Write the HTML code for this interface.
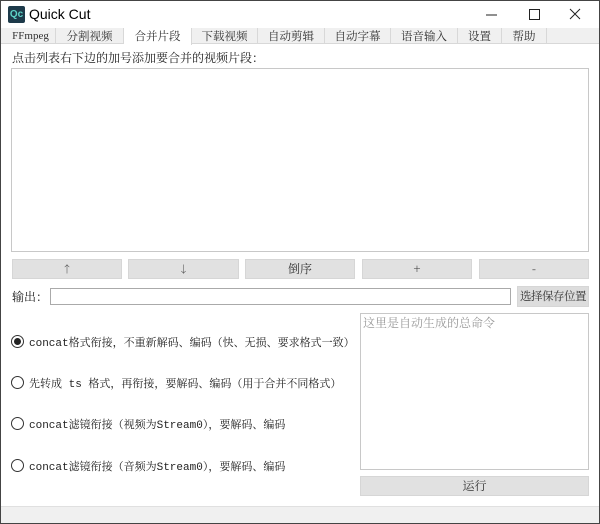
<!DOCTYPE html>
<html><head><meta charset="utf-8"><style>
*{box-sizing:border-box;margin:0;padding:0}
body{width:600px;height:524px;overflow:hidden;background:#fff;font-family:"Liberation Mono","Noto Serif CJK SC",serif;font-size:12px;color:#222;position:relative}
.win{position:absolute;left:0;top:0;width:600px;height:524px;border:1px solid #444;background:#fff}
.a{position:absolute}
.title{left:0;top:0;width:598px;height:27px;background:#fff}
.logo{left:7px;top:5px;width:17px;height:17px;background:#1d3a4a;color:#5fd4c8;font:bold 10px "Liberation Sans",sans-serif;line-height:17px;text-align:center;border-radius:2px}
.tt{left:28px;top:5px;font:14px "Liberation Sans",sans-serif;color:#000}
.tabs{left:0;top:27px;width:598px;height:16px;background:#f0f0f0;border-bottom:1px solid #d8d8d8}
.tab{position:absolute;top:27px;height:16px;line-height:16px;text-align:center;color:#333;font-size:11.5px;font-family:"Noto Serif CJK SC",serif;border-right:1px solid #d8d8d8;white-space:nowrap;overflow:hidden}
.sel{background:#fff;height:17px}
.box{border:1px solid #c8c8c8;background:#fff}
.btn{background:#e1e1e1;border:1px solid #d6d6d6;text-align:center;color:#333;font-family:"Noto Serif CJK SC",serif;white-space:nowrap;overflow:hidden}
.rad{position:absolute;left:10px;width:13px;height:13px;border:1px solid #333;border-radius:50%;background:#fff}
.rad.on::after{content:"";position:absolute;left:2px;top:2px;width:7px;height:7px;border-radius:50%;background:#222}
.rt{position:absolute;left:28px;font-size:11px;white-space:nowrap}
.cn{font-family:"Noto Serif CJK SC",serif}
</style></head><body><div class="win">
<div class="a title"></div>
<div class="a logo">Qc</div>
<div class="a tt">Quick Cut</div>
<svg class="a" style="left:480px;top:6px" width="110" height="16"><line x1="5" y1="8" x2="16" y2="8" stroke="#222"/><rect x="48.5" y="2.5" width="10" height="10" fill="none" stroke="#222"/><path d="M89 2l10 10M99 2l-10 10" stroke="#222"/></svg>
<div class="a tabs"></div>
<div class="tab" style="left:5px;width:50px;font-family:'Liberation Serif',serif;font-size:11px">FFmpeg</div>
<div class="tab" style="left:55px;width:68px">分割视频</div>
<div class="tab sel" style="left:123px;width:68px">合并片段</div>
<div class="tab" style="left:191px;width:66px">下载视频</div>
<div class="tab" style="left:257px;width:67px">自动剪辑</div>
<div class="tab" style="left:324px;width:66px">自动字幕</div>
<div class="tab" style="left:390px;width:67px">语音输入</div>
<div class="tab" style="left:457px;width:44px">设置</div>
<div class="tab" style="left:501px;width:45px">帮助</div>
<div class="a cn" style="left:11px;top:48px;font-size:12px">点击列表右下边的加号添加要合并的视频片段：</div>
<div class="a box" style="left:10px;top:67px;width:578px;height:184px"></div>
<div class="a btn" style="left:11px;top:258px;width:110px;height:20px;line-height:18px;font-size:10px">↑</div>
<div class="a btn" style="left:127px;top:258px;width:111px;height:20px;line-height:18px;font-size:10px">↓</div>
<div class="a btn" style="left:244px;top:258px;width:110px;height:20px;line-height:18px">倒序</div>
<div class="a btn" style="left:361px;top:258px;width:110px;height:20px;line-height:18px">+</div>
<div class="a btn" style="left:478px;top:258px;width:110px;height:20px;line-height:18px">-</div>
<div class="a cn" style="left:11px;top:287px">输出：</div>
<div class="a box" style="left:49px;top:287px;width:461px;height:17px;border-color:#aaa"></div>
<div class="a btn" style="left:516px;top:285px;width:72px;height:21px;line-height:19px;background:#ddd;font-size:11.5px;letter-spacing:-0.5px">选择保存位置</div>
<div class="a box" style="left:359px;top:312px;width:229px;height:157px"></div>
<div class="a cn" style="left:362px;top:313px;color:#999;font-size:12px">这里是自动生成的总命令</div>
<div class="a btn" style="left:359px;top:475px;width:229px;height:20px;line-height:18px">运行</div>
<div class="rad on" style="top:334px"></div><div class="rt" style="top:333px">concat<span class="cn">格式衔接，不重新解码、编码（快、无损、要求格式一致）</span></div>
<div class="rad" style="top:375px"></div><div class="rt" style="top:374px"><span class="cn">先转成</span> ts <span class="cn">格式，再衔接，要解码、编码（用于合并不同格式）</span></div>
<div class="rad" style="top:416px"></div><div class="rt" style="top:415px">concat<span class="cn">滤镜衔接（视频为</span>Stream0<span class="cn">），要解码、编码</span></div>
<div class="rad" style="top:458px"></div><div class="rt" style="top:457px">concat<span class="cn">滤镜衔接（音频为</span>Stream0<span class="cn">），要解码、编码</span></div>
<div class="a" style="left:0;top:505px;width:598px;height:17px;background:#f0f0f0;border-top:1px solid #e0e0e0"></div>
</div></body></html>
